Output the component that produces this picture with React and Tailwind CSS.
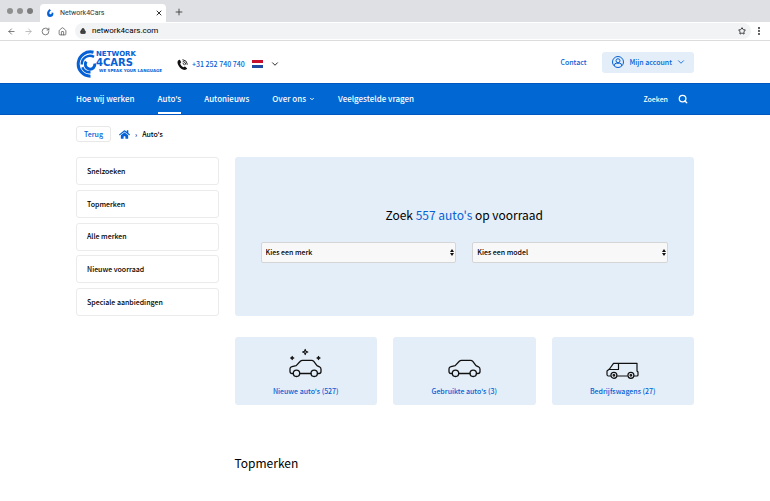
import React, { useState } from 'react';
import { ArrowLeft, ArrowRight, RotateCw, House, Lock, Star, EllipsisVertical, X, Plus, ChevronDown, Search } from 'lucide-react';
import { FaHome } from 'react-icons/fa';

const NAV_ITEMS = [
  { label: 'Hoe wij werken' },
  { label: "Auto's", active: true },
  { label: 'Autonieuws' },
  { label: 'Over ons', dropdown: true },
  { label: 'Veelgestelde vragen' },
];

const SIDEBAR_ITEMS = ['Snelzoeken', 'Topmerken', 'Alle merken', 'Nieuwe voorraad', 'Speciale aanbiedingen'];

const CarBody = () => (
  <>
    <path d="M4.300 21.500H3C1.700 21.500 1 20.800 1 19.500V16.800C1 15.500 1.800 14.900 3 14.600L7.200 13.600L11.300 9.200C12 8.500 12.600 8.300 13.500 8.300H22.500C23.500 8.300 24.200 8.600 24.800 9.300L28 13.600L30.500 14.800C31.600 15.400 32 16.200 32 17.200V19.500C32 20.800 31.300 21.500 30 21.500H28.500M10.800 21.500H22" />
    <circle cx="7.500" cy="21.300" r="3.200" />
    <circle cx="25.200" cy="21.300" r="3.200" />
  </>
);

const SparkleCarIcon = () => (
  <svg viewBox="0 -4 33 32" className="w-[33px] h-[32px]" fill="none" stroke="#111" strokeWidth="1.300" strokeLinejoin="round" strokeLinecap="round">
    <CarBody />
    <path d="M16.200 -2.600L16.900 -0.700L18.800 0L16.900 0.700L16.200 2.600L15.500 0.700L13.600 0L15.500 -0.700ZM3.200 4.400L3.700 5.500L4.800 6L3.700 6.500L3.200 7.600L2.700 6.500L1.600 6L2.700 5.500ZM29.500 4.400L30 5.500L31.100 6L30 6.500L29.500 7.600L29 6.500L27.900 6L29 5.500Z" strokeWidth="1.100" />
  </svg>
);

const CarIcon = () => (
  <svg viewBox="0 -4 33 32" className="w-[33px] h-[32px]" fill="none" stroke="#111" strokeWidth="1.300" strokeLinejoin="round" strokeLinecap="round">
    <CarBody />
  </svg>
);

const VanIcon = () => (
  <svg viewBox="0 -4 33 32" className="w-[33px] h-[32px]" fill="none" stroke="#111" strokeWidth="1.200" strokeLinejoin="round">
    <path d="M4.800 24H2.500C1.500 24 1 23.500 1 22.500V19L3.500 17L7.500 11.300H31V19L32 20V23C32 23.700 31.500 24 31 24H28M11 24H21.700M3.500 17.500H12.500V11.300" />
    <circle cx="7.900" cy="23.300" r="3" />
    <circle cx="24.900" cy="23.300" r="3" />
    <circle cx="7.900" cy="23.300" r="0.800" />
    <circle cx="24.900" cy="23.300" r="0.800" />
  </svg>
);

const CATEGORIES = [
  { label: "Nieuwe auto's (527)", Icon: SparkleCarIcon },
  { label: "Gebruikte auto's (3)", Icon: CarIcon },
  { label: 'Bedrijfswagens (27)', Icon: VanIcon },
];

const PhoneIcon = () => (
  <svg viewBox="0 0 11 11" className="size-[11px]" fill="none" stroke="#111">
    <path d="M1.800 1C0.500 1.800 0.200 3.200 0.800 5C1.800 7.800 4 10 6.500 10.800C8 11.200 9.500 10.800 10.200 9.600L8 7.600L6.300 8.300C4.800 7.500 3.700 6.200 3.200 4.600L4.200 3.200L2.900 0.800Z" fill="#111" stroke="none" />
    <path d="M5.600 4.200A2.200 2.200 0 0 1 7.300 6.200M5.700 2.300A4.100 4.100 0 0 1 9 5.800M5.500 0.600A5.800 5.800 0 0 1 10.500 5.500" strokeWidth="0.900" />
  </svg>
);

const LogoMark = ({ className }) => (
  <svg viewBox="0 0 28 28" className={className} fill="none" stroke="#0561d5">
    <path d="M17.500 2.200A12.200 12.200 0 1 0 14.500 26.200" strokeWidth="3" />
    <path d="M18 6.900A8.200 8.200 0 0 0 5.800 14.500M6.300 17.200A8.200 8.200 0 0 0 14.500 22.200" strokeWidth="2.400" />
    <path d="M10.200 11.500A4.800 4.800 0 1 0 18.800 13.500" strokeWidth="3" />
  </svg>
);

const BrowserBar = () => (
  <div className="font-['Roboto',sans-serif] text-[#333]">
    <div className="flex h-[22px] items-end bg-[#dee0e4] pl-[7px]">
      <div className="flex h-full items-center gap-1">
        <span className="size-1.5 rounded-full bg-[#8f8f8f]" />
        <span className="size-1.5 rounded-full bg-[#8f8f8f]" />
        <span className="size-1.5 rounded-full bg-[#7b7b7b]" />
      </div>
      <div className="ml-[7px] flex h-[18px] w-[126px] items-center rounded-t bg-white pl-1.5 pr-[3px]">
        <svg viewBox="0 0 8 8" className="size-2" fill="#0561d5">
          <path d="M3.500 0L5 1.500L3.800 2.500C3 3.500 3.300 5 4.300 5.200C5.300 5.400 6 4.500 5.500 3.500L7.300 3.800C7.800 6.500 6 8 4 8C1 8 -0.500 3.500 3.500 0Z" />
        </svg>
        <span className="ml-1.5 flex-1 text-[7px]">Network4Cars</span>
        <button aria-label="Tab sluiten"><X className="size-2" strokeWidth={3} /></button>
      </div>
      <button aria-label="Nieuw tabblad" className="mb-[5px] ml-2"><Plus className="size-2.5" /></button>
    </div>
    <div className="flex h-[19px] items-center border-b border-[#dcdcdc] pl-[7px] pr-1.5">
      <div className="flex items-center gap-2 text-[#555]">
        <button aria-label="Vorige"><ArrowLeft className="size-[9px]" /></button>
        <button aria-label="Volgende" className="text-[#aaa]"><ArrowRight className="size-[9px]" /></button>
        <button aria-label="Vernieuwen"><RotateCw className="size-[9px]" /></button>
        <button aria-label="Startpagina"><House className="size-[9px]" /></button>
      </div>
      <div className="ml-2 flex h-4 flex-1 items-center rounded-full bg-[#f1f3f4] px-[5px]">
        <Lock className="size-1.5 fill-[#444]" strokeWidth={3} />
        <input aria-label="Adres" defaultValue="network4cars.com" className="ml-1.5 flex-1 bg-transparent text-[8px] text-black outline-none" />
        <button aria-label="Bladwijzer"><Star className="size-2" strokeWidth={3} /></button>
      </div>
      <button aria-label="Menu" className="ml-[3px]"><EllipsisVertical className="size-2.5" strokeWidth={3} /></button>
    </div>
  </div>
);

const Header = () => (
  <header className="flex h-[42px] items-center px-[76px] text-[#0561d5]">
    <a href="#" className="flex items-center">
      <LogoMark className="mt-1 size-7" />
      <span className="-ml-2 flex flex-col font-['DejaVu_Sans',sans-serif] font-bold">
        <span className="text-[7px] leading-[8px]">NETWORK</span>
        <span className="text-[10px] leading-[9px]">4CARS</span>
        <span className="ml-[3px] text-[4px] leading-[7px]">WE SPEAK YOUR LANGUAGE</span>
      </span>
    </a>
    <a href="tel:+31252740740" className="ml-[15px] mt-1 flex items-center gap-1 text-[7px] font-medium">
      <PhoneIcon />
      +31 252 740 740
    </a>
    <button aria-label="Taal" className="ml-[7px] mt-1 flex items-center gap-[7px]">
      <span className="flex h-2 w-[11px] flex-col">
        <span className="flex-1 bg-[#c8102e]" />
        <span className="flex-1 bg-white" />
        <span className="flex-1 bg-[#1f4aa0]" />
      </span>
      <ChevronDown className="size-2.5 text-black" />
    </button>
    <a href="#" className="ml-auto text-[7px] font-medium">Contact</a>
    <button className="ml-[15px] flex h-[21px] items-center rounded-[3px] bg-[#e4eef8] pl-2.5 pr-2 text-[7px] font-medium">
      <svg viewBox="0 0 24 24" className="size-3" fill="none" stroke="currentColor" strokeWidth="2">
        <circle cx="12" cy="12" r="11" />
        <circle cx="12" cy="9.500" r="4" />
        <path d="M5 19.500V18a3.500 3.500 0 0 1 3.500-3.500h7A3.500 3.500 0 0 1 19 18v1.500" />
      </svg>
      <span className="ml-1.5">Mijn account</span>
      <ChevronDown className="ml-1 size-2.5" />
    </button>
  </header>
);

const Navbar = () => (
  <nav className="flex h-8 items-center border-y border-[#0057c0] bg-[#0067d3] px-[76px] text-[8px] font-medium text-white">
    <div className="flex h-full gap-[23px]">
      {NAV_ITEMS.map((item) => (
        <a
          key={item.label}
          href="#"
          className={`flex h-full items-center gap-[3px] border-y-2 border-t-transparent ${item.active ? 'border-b-white' : 'border-b-transparent'}`}
        >
          {item.label}
          {item.dropdown && <ChevronDown className="size-1.5" strokeWidth={4} />}
        </a>
      ))}
    </div>
    <button className="ml-auto mr-1.5 flex items-center gap-2.5 text-[7px]">
      Zoeken
      <Search className="size-2.5" strokeWidth={3} />
    </button>
  </nav>
);

const SelectBox = ({ id, label, value, onChange }) => (
  <div className="relative flex-1">
    <select
      id={id}
      aria-label={label}
      value={value}
      onChange={(e) => onChange(e.target.value)}
      className="block h-[21px] w-full appearance-none rounded-xs border border-[#d5d5d5] bg-[#f8f8f8] px-1 text-[7px] font-medium text-black"
    >
      <option value="">{label}</option>
    </select>
    <svg viewBox="0 0 4 7" className="pointer-events-none absolute right-0.5 top-[7px] h-[7px] w-1" fill="#111">
      <path d="M2 0L4 3H0ZM2 7L4 4H0Z" />
    </svg>
  </div>
);

const App = () => {
  const [brand, setBrand] = useState('');
  const [model, setModel] = useState('');

  return (
    <div className="bg-white font-['Noto_Sans_CJK_SC',sans-serif] text-black">
      <BrowserBar />
      <Header />
      <Navbar />

      <main className="px-[76px] pt-[11px]">
        {/* Breadcrumb */}
        <div className="flex h-4 items-center text-[7px] font-medium">
          <a href="#" className="flex h-4 items-center rounded-[3px] border border-[#e8e8e8] px-[7px] text-[#0561d5]">Terug</a>
          <a href="#" aria-label="Home" className="ml-2"><FaHome className="size-[11px] text-[#0561d5]" /></a>
          <span className="mx-[5px]">›</span>
          <span>Auto's</span>
        </div>

        <div className="mt-[15px] grid grid-cols-4 gap-x-4">
          {/* Sidebar */}
          <aside className="flex flex-col justify-between">
            {SIDEBAR_ITEMS.map((item) => (
              <a key={item} href="#" className="flex h-7 items-center rounded-[3px] border border-[#ebebeb] px-2.5 text-[7px] font-medium">
                {item}
              </a>
            ))}
          </aside>

          <section className="col-span-3 rounded-[3px] bg-[#e4eef8] px-[26px] pb-[53px] pt-12">
            <h1 className="text-center text-[12px] leading-5">
              Zoek <span className="text-[#0561d5]">557 auto's</span> op voorraad
            </h1>
            <div className="mt-[17px] flex gap-4">
              <SelectBox id="brand" label="Kies een merk" value={brand} onChange={setBrand} />
              <SelectBox id="model" label="Kies een model" value={model} onChange={setModel} />
            </div>
          </section>

          {/* Categories */}
          <section className="col-span-3 col-start-2 mt-[21px] grid grid-cols-3 gap-4">
            {CATEGORIES.map(({ label, Icon }) => (
              <a key={label} href="#" className="flex h-[68px] flex-col items-center rounded-[3px] bg-[#e4eef8] pt-[11px] text-[7px] font-medium text-[#0561d5]">
                <Icon />
                <span className="mt-1.5 leading-[10px]">{label}</span>
              </a>
            ))}
          </section>

          <h2 className="col-span-3 col-start-2 mt-12 text-[12px] leading-5">Topmerken</h2>
        </div>
      </main>
    </div>
  );
};

export default App;
